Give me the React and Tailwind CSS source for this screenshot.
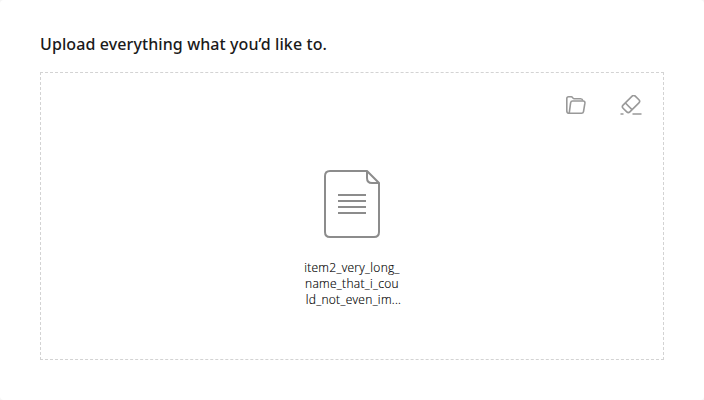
function FolderIcon() {
  return (
    <svg width="20" height="20" viewBox="0 0 20 20" fill="none" stroke="#999" strokeWidth="1.6" strokeLinejoin="round">
      <path d="M3.2 18.3C1.7 18.3.8 17.4.8 16V3.6C.8 2.3 1.5 1.7 2.6 1.7H5.4C6.6 1.7 6.6 3.7 7.9 3.7H14.6C15.9 3.7 16.6 4.3 16.8 5.6" />
      <path d="M3.2 18.3H15.5C16.7 18.3 17.3 17.7 17.5 16.6L18.9 8.2C19.1 6.7 18.4 6 17.1 6H6.6C5.4 6 4.8 6.6 4.6 7.8L3.2 18.3Z" />
    </svg>
  );
}

function EraserIcon() {
  return (
    <svg width="22" height="20" viewBox="0 0 22 20" fill="none" stroke="#999" strokeWidth="1.6">
      <rect x="-8.6" y="-4.8" width="17.2" height="9.6" rx="2.2" transform="translate(11 9) rotate(-45)" />
      <path d="M5.4 8L12 14.6" />
      <path d="M0.5 19H3.5M12.5 19H21.5" />
    </svg>
  );
}

function DocumentIcon() {
  return (
    <svg width="56" height="68" viewBox="0 0 56 68" fill="none" stroke="#8c8c8c" strokeWidth="2">
      <path d="M43 1H6Q1 1 1 6V62Q1 67 6 67H50Q55 67 55 62V13L43 1V8Q43 13 48 13H55" strokeLinejoin="round" />
      <path d="M14 25H42M14 31H42M14 37H42M14 43H42" />
    </svg>
  );
}

export default function App() {
  return (
    <div className="h-[400px] w-[704px] bg-[#f5f5f5] font-['Open_Sans',sans-serif]">
      <main className="flex h-full flex-col rounded bg-white px-10 pt-8 pb-10 text-[#1a1a1a]">
        <h1 className="h-10 font-['Noto_Sans',sans-serif] text-base leading-6 font-medium tracking-[0.1px] whitespace-nowrap">Upload everything what you’d like to.</h1>
        <section className="flex h-72 flex-col border border-dashed border-[#d3d3d3]">
          <div className="flex h-[97px] items-start justify-end gap-[34px] pt-[22px] pr-[21px]">
            <button aria-label="Browse files"><FolderIcon /></button>
            <button aria-label="Clear files"><EraserIcon /></button>
          </div>
          <div className="flex flex-col items-center">
            <DocumentIcon />
            <p className="mt-[22px] flex flex-col items-center text-xs leading-4 font-light tracking-[0.3px] whitespace-nowrap text-black [-webkit-text-stroke:0.15px_black]">
              <span>item2_very_long_</span>
              <span>name_that_i_cou</span>
              <span className="pl-[3px]">ld_not_even_im...</span>
            </p>
          </div>
        </section>
      </main>
    </div>
  );
}
